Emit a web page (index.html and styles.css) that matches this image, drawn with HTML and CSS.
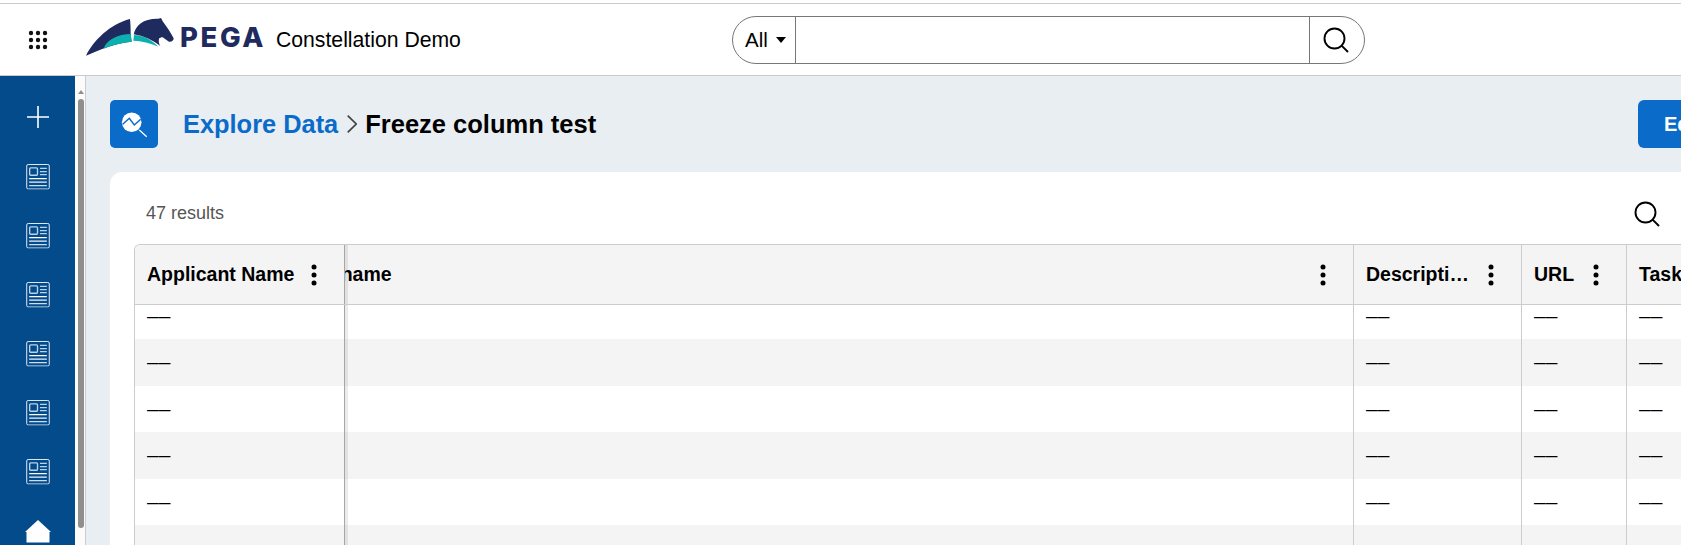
FILE: index.html
```html
<!DOCTYPE html>
<html lang="en">
<head>
<meta charset="utf-8">
<title>Freeze column test</title>
<link rel="stylesheet" href="styles.css">
</head>
<body>
<svg class="defs" width="0" height="0" aria-hidden="true">
  <symbol id="news" viewBox="0 0 24 26">
    <rect x="0.5" y="0.5" width="23" height="25" rx="1.5" fill="none" stroke="#e4edf6" stroke-width="1"/>
    <rect x="3.5" y="4" width="8" height="7.5" rx="1" fill="none" stroke="#bcd2e8" stroke-width="1.4"/>
    <path d="M14 4.5h7M14 7.7h7M14 10.9h7" stroke="#bcd2e8" stroke-width="1.3"/>
    <path d="M3 15h18" stroke="#fff" stroke-width="1.2"/>
    <path d="M3 18.5h18" stroke="#f0f5fa" stroke-width="1.2"/>
    <path d="M3 22h18" stroke="#cfdeee" stroke-width="1.2"/>
  </symbol>
  <symbol id="kebab" viewBox="0 0 6 22">
    <circle cx="3" cy="3" r="2.5"/><circle cx="3" cy="11" r="2.5"/><circle cx="3" cy="19" r="2.5"/>
  </symbol>
  <symbol id="loupe" viewBox="0 0 26 26">
    <circle cx="11.5" cy="11.5" r="10" fill="none" stroke="currentColor" stroke-width="1.9"/>
    <path d="M18.6 18.6L25 25" stroke="currentColor" stroke-width="1.9" fill="none"/>
  </symbol>
</svg>

<div class="topline"></div>
<header class="header">
  <svg class="apps" width="20" height="20" viewBox="0 0 20 20" aria-hidden="true">
    <g fill="#111">
      <circle cx="3" cy="3" r="2.2"/><circle cx="10" cy="3" r="2.2"/><circle cx="17" cy="3" r="2.2"/>
      <circle cx="3" cy="10" r="2.2"/><circle cx="10" cy="10" r="2.2"/><circle cx="17" cy="10" r="2.2"/>
      <circle cx="3" cy="17" r="2.2"/><circle cx="10" cy="17" r="2.2"/><circle cx="17" cy="17" r="2.2"/>
    </g>
  </svg>
  <svg class="logo" width="100" height="60" viewBox="0 0 300 180" aria-hidden="true">
    <path fill="#1f2a5e" d="M33 137C55 92 105 42 165 27C167 45 167 60 167 72L170 95C120 100 75 118 33 137Z"/>
    <path fill="#0cb0ae" d="M86 116C95 88 130 73 167 72L170 95C140 98 110 105 86 116Z"/>
    <path fill="#0cb0ae" d="M175 92L177 75C205 75 230 90 250 110C225 98 200 93 175 92Z"/>
    <path fill="#1f2a5e" d="M176 73C182 45 205 25 250 26L258 24L263 34C275 50 288 70 296 85C296 92 290 96 282 95L263 82C258 82 254 84 252 86C250 94 252 102 256 108C232 90 205 77 176 73Z"/>
  </svg>
  <span class="wordmark">PEGA</span>
  <span class="appname">Constellation Demo</span>
  <div class="search">
    <div class="search-scope">
      <span>All</span>
      <span class="caret"></span>
    </div>
    <div class="search-input"></div>
    <div class="search-go">
      <svg class="loupe" width="26" height="26"><use href="#loupe"/></svg>
    </div>
  </div>
</header>

<div class="shell">
  <nav class="sidebar">
    <svg class="plus" width="24" height="24" viewBox="0 0 24 24" aria-hidden="true">
      <path d="M12 1v22M1 12h22" stroke="#fff" stroke-width="1.6" fill="none"/>
    </svg>
    <svg class="news" width="24" height="25.5"><use href="#news"/></svg>
    <svg class="news" width="24" height="25.5"><use href="#news"/></svg>
    <svg class="news" width="24" height="25.5"><use href="#news"/></svg>
    <svg class="news" width="24" height="25.5"><use href="#news"/></svg>
    <svg class="news" width="24" height="25.5"><use href="#news"/></svg>
    <svg class="news" width="24" height="25.5"><use href="#news"/></svg>
    <svg class="home" width="30" height="27" viewBox="0 0 30 27" aria-hidden="true">
      <path fill="#fff" d="M15 2L28 14H26.5V24.5H3.5V14H2Z"/>
    </svg>
  </nav>
  <div class="scrollbar">
    <span class="scroll-up"></span>
    <span class="scroll-thumb"></span>
  </div>
  <main class="main">
    <div class="content">
      <div class="pagehead">
        <div class="pageicon">
          <svg width="48" height="48" viewBox="0 0 48 48" aria-hidden="true">
            <circle cx="21.7" cy="22.3" r="9.8" fill="#fff"/>
            <path d="M12.7 24.3L19.3 18.3L24.3 25L30.7 19.3" fill="none" stroke="#0a6bc9" stroke-width="1.5"/>
            <path d="M29.3 30L36.7 36.7" stroke="#fff" stroke-width="1.3"/>
          </svg>
        </div>
        <a class="crumb">Explore Data</a>
        <svg class="chev" width="10" height="18" viewBox="0 0 10 18" aria-hidden="true">
          <path d="M0.7 0.6L9.2 9L0.7 17.4" fill="none" stroke="#444" stroke-width="1.7"/>
        </svg>
        <h1 class="title">Freeze column test</h1>
        <button class="edit">Edit</button>
      </div>
      <section class="card">
        <div class="toolbar">
          <span class="count">47 results</span>
          <svg class="loupe" width="26" height="26"><use href="#loupe"/></svg>
        </div>
        <div class="table">
          <div class="row head">
            <div class="cell frozen"><span>Applicant Name</span><svg class="kebab" width="6" height="22"><use href="#kebab"/></svg></div>
            <div class="cell wide clipped"><span>name</span><svg class="kebab" width="6" height="22"><use href="#kebab"/></svg></div>
            <div class="cell"><span>Descripti…</span><svg class="kebab" width="6" height="22"><use href="#kebab"/></svg></div>
            <div class="cell"><span>URL</span><svg class="kebab" width="6" height="22"><use href="#kebab"/></svg></div>
            <div class="cell"><span>Task</span><svg class="kebab" width="6" height="22"><use href="#kebab"/></svg></div>
          </div>
          <div class="row first">
            <div class="cell frozen"><span class="dash">––</span></div><div class="cell wide"></div><div class="cell"><span class="dash">––</span></div><div class="cell"><span class="dash">––</span></div><div class="cell"><span class="dash">––</span></div>
          </div>
          <div class="row alt">
            <div class="cell frozen"><span class="dash">––</span></div><div class="cell wide"></div><div class="cell"><span class="dash">––</span></div><div class="cell"><span class="dash">––</span></div><div class="cell"><span class="dash">––</span></div>
          </div>
          <div class="row">
            <div class="cell frozen"><span class="dash">––</span></div><div class="cell wide"></div><div class="cell"><span class="dash">––</span></div><div class="cell"><span class="dash">––</span></div><div class="cell"><span class="dash">––</span></div>
          </div>
          <div class="row alt">
            <div class="cell frozen"><span class="dash">––</span></div><div class="cell wide"></div><div class="cell"><span class="dash">––</span></div><div class="cell"><span class="dash">––</span></div><div class="cell"><span class="dash">––</span></div>
          </div>
          <div class="row">
            <div class="cell frozen"><span class="dash">––</span></div><div class="cell wide"></div><div class="cell"><span class="dash">––</span></div><div class="cell"><span class="dash">––</span></div><div class="cell"><span class="dash">––</span></div>
          </div>
          <div class="row alt">
            <div class="cell frozen"></div><div class="cell wide"></div><div class="cell"></div><div class="cell"></div><div class="cell"></div>
          </div>
        </div>
      </section>
    </div>
  </main>
</div>
</body>
</html>
```
FILE: styles.css
```css
* { box-sizing: border-box; }
html, body { margin: 0; padding: 0; height: 545px; overflow: hidden; background: #fff; }
body { font-family: "Liberation Sans", Arial, sans-serif; color: #000; }
.defs { position: absolute; }

.topline { height: 4px; border-bottom: 1px solid #ccc; }

.header {
  height: 72px;
  border-bottom: 1px solid #ccc;
  display: flex;
  align-items: center;
  padding-left: 28px;
}
.apps { margin-right: 27px; flex: none; }
.logo { flex: none; }
.wordmark {
  margin: 0 0 6px 5px;
  font-family: Inter, "Liberation Sans", sans-serif;
  font-weight: 800;
  font-size: 27.5px;
  letter-spacing: 2.6px;
  color: #1f2a5e;
  width: 96px;
  flex: none;
}
.appname { font-size: 21.2px; width: 185px; flex: none; margin-top: 1px; white-space: nowrap; }

.search {
  margin-left: 271px;
  width: 633px;
  height: 48px;
  border: 1px solid #777;
  border-radius: 24px;
  display: flex;
  align-items: stretch;
  flex: none;
}
.search-scope {
  width: 63px;
  padding-left: 12px;
  display: flex;
  align-items: center;
  gap: 8px;
  font-size: 20.5px;
  border-right: 1px solid #777;
}
.caret {
  width: 0;
  height: 0;
  border-left: 5px solid transparent;
  border-right: 5px solid transparent;
  border-top: 6.5px solid #000;
}
.search-input { flex: 1; }
.search-go {
  width: 55px;
  border-left: 1px solid #777;
  display: flex;
  align-items: center;
  padding-left: 13px;
  padding-right: 15px;
}

.shell { display: flex; height: 469px; }
.sidebar {
  width: 75px;
  flex: none;
  background: #044b8c;
  display: flex;
  flex-direction: column;
  align-items: center;
  gap: 33.5px;
  padding: 29px 0 0 1px;
  overflow: hidden;
}
.plus { margin-bottom: 1.5px; flex: none; }
.news { flex: none; display: block; }
.home { flex: none; margin-top: 0; }

.scrollbar {
  width: 11px;
  flex: none;
  background: #fbfbfb;
  border-right: 1px solid #ccc;
  position: relative;
  display: flex;
  flex-direction: column;
  align-items: center;
  padding: 14px 1px 0 2px;
}
.scroll-up {
  width: 0;
  height: 0;
  border-left: 3.5px solid transparent;
  border-right: 3.5px solid transparent;
  border-bottom: 4px solid #8f8f8f;
  margin-bottom: 5px;
}
.scroll-thumb { width: 6px; height: 429px; background: #8f8f8f; border-radius: 3px; }

.main { flex: 1; min-width: 0; background: #e9eef3; overflow: hidden; padding: 24px 0 0 24px; }
.content { width: 1610px; }

.pagehead { display: flex; align-items: center; height: 48px; margin-bottom: 24px; }
.pageicon { width: 48px; height: 48px; background: #0a6bc9; border-radius: 5px; flex: none; margin-right: 25px; }
.pageicon svg { display: block; }
.crumb { font-size: 25.4px; font-weight: 700; color: #0a6bc9; }
.chev { margin: 0 8px 0 9px; flex: none; }
.title { margin: 0; font-size: 25.5px; font-weight: 700; color: #000; }
.edit {
  margin-left: auto;
  width: 82px;
  height: 48px;
  border: 0;
  border-radius: 6px;
  background: #0a6bc9;
  color: #fff;
  font: 700 20px "Liberation Sans", Arial, sans-serif;
  text-align: left;
  padding: 0 0 0 26px;
  flex: none;
}

.card { background: #fff; border-radius: 12px 12px 0 0; height: 400px; overflow: hidden; padding-left: 24px; }
.toolbar {
  height: 72px;
  display: flex;
  align-items: flex-start;
  justify-content: space-between;
  padding: 29px 60px 0 12px;
}
.count { font-size: 18px; line-height: 22px; color: #555; margin-top: 1px; }
.loupe { display: block; color: #000; flex: none; }

.table {
  width: 1700px;
  border-top: 1px solid #ccc;
  border-left: 1px solid #ccc;
  border-top-left-radius: 6px;
  overflow: hidden;
}
.row {
  display: grid;
  grid-template-columns: 210px 1009px 168px 105px 208px;
  height: 46.5px;
}
.row.alt { background: #f4f4f4; }
.row.first { height: 34px; }
.row.first .cell { padding-bottom: 12px; }
.row.head {
  height: 60px;
  background: #f4f4f4;
  border-bottom: 1px solid #ccc;
}
.cell {
  display: flex;
  align-items: center;
  justify-content: space-between;
  padding: 0 27px 0 12px;
  border-right: 1px solid #ccc;
  min-width: 0;
}
.head .cell { font-size: 19.5px; font-weight: 700; }
.cell.frozen { border-right-color: #a6a6a6; }
.cell.wide { background: linear-gradient(to right, rgba(0, 0, 0, 0.08) 3px, transparent 3px); }
.cell.clipped { padding-left: 0; overflow: hidden; }
.cell.clipped span { margin-left: -4.3px; }
.kebab { display: block; flex: none; fill: #000; }
.dash { font-size: 21px; line-height: 20px; }
```
